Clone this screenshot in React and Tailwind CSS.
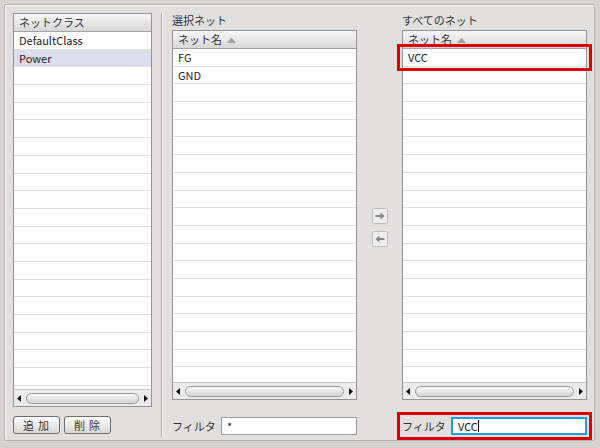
import React from "react";

const FONT = { fontFamily: '"Noto Sans CJK JP", "Noto Sans", sans-serif' };

const SortArrow = () => (
	<svg width="9" height="6" viewBox="0 0 9 6" className="ml-[5px]">
		<path d="M0 6 L4.5 0.5 L9 6 Z" fill="#a3a3a3" />
	</svg>
);

const ScrollBar = () => (
	<div className="h-[17px] shrink-0 flex items-center border-t border-[#c8c8c8] bg-[#ebebeb] px-[3px]">
		<svg width="4" height="7" viewBox="0 0 4 7">
			<path d="M4 0 L0 3.5 L4 7 Z" fill="#111" />
		</svg>
		<div className="flex-1 mx-[5px] h-[11px] rounded-full border border-[#9a9a9a] bg-gradient-to-b from-[#f8f8f8] to-[#d4d4d4]" />
		<svg width="4" height="7" viewBox="0 0 4 7">
			<path d="M0 0 L4 3.5 L0 7 Z" fill="#111" />
		</svg>
	</div>
);

const ListBox = ({ title, sort, rows, selected, height }) => (
	<div
		className="flex flex-col border border-[#8f959a] bg-white overflow-hidden"
		style={{ height }}
	>
		<div className="h-[18px] shrink-0 flex items-center pl-[5px] text-[11px] text-[#333] bg-gradient-to-b from-[#f7f7f7] to-[#d8d8d8] border-b border-[#a5a5a5]">
			<span>{title}</span>
			{sort && <SortArrow />}
		</div>
		<div className="flex-1 overflow-hidden">
			{Array.from({ length: 24 }).map((_, i) => (
				<div
					key={i}
					className={`h-[17.7px] flex items-center pl-[5px] text-[11px] text-[#222] border-b border-[#e0e0e0] ${
						selected === i ? "bg-[#dddded]" : "bg-white"
					}`}
				>
					{rows[i] || ""}
				</div>
			))}
		</div>
		<ScrollBar />
	</div>
);

const GrayButton = ({ children }) => (
	<button className="w-[47px] h-[18px] rounded-[3px] border border-[#6e6e6e] bg-gradient-to-b from-[#fbfbfb] to-[#d9d9d9] text-[11px] text-[#333] tracking-[4px] pl-[3px] flex items-center justify-center">
		{children}
	</button>
);

const ArrowButton = ({ dir }) => (
	<div className="w-[16px] h-[16px] rounded-[2px] border border-[#bdbdbd] bg-[#eeeeee] flex items-center justify-center">
		<svg width="10" height="8" viewBox="0 0 10 8">
			{dir === "right" ? (
				<path d="M0.5 3 H5.5 V0.5 L9.5 4 L5.5 7.5 V5 H0.5 Z" fill="#858585" />
			) : (
				<path d="M9.5 3 H4.5 V0.5 L0.5 4 L4.5 7.5 V5 H9.5 Z" fill="#858585" />
			)}
		</svg>
	</div>
);

const FilterRow = ({ value, active }) => (
	<div className="h-[18px] flex items-center">
		<span className="w-[49px] text-[11px] text-[#333]">フィルタ</span>
		<div
			className={`flex-1 h-full bg-white flex items-center pl-[5px] text-[11px] text-[#222] ${
				active ? "border-2 border-[#1e9fe3]" : "border border-[#9c9c9c]"
			}`}
		>
			{value}
			{active && <span className="w-px h-[12px] bg-[#111]" />}
		</div>
	</div>
);

export default function App() {
	return (
		<div className="w-[600px] h-[448px] bg-[#d5d3d2] pt-[4px] pl-[4px] pr-[5px]" style={FONT}>
			<div className="h-[437px] rounded-[2px] border border-[#b3b1b0] shadow-[inset_1px_1px_0_#ffffff] bg-[#e2e0df] pt-[8px] pl-[8px] flex">
				{/* left: net classes */}
				<div className="w-[139px] flex flex-col">
					<ListBox title="ネットクラス" rows={["DefaultClass", "Power"]} selected={1} height={394} />
					<div className="mt-[9px] flex gap-[4px]">
						<GrayButton>追加</GrayButton>
						<GrayButton>削除</GrayButton>
					</div>
				</div>

				<div className="ml-[9px] w-[2px] h-[424px] border-l border-[#a9a7a6] border-r border-r-white" />

				{/* middle: selected nets */}
				<div className="ml-[9px] w-[185px] flex flex-col">
					<div className="h-[17px] text-[11px] text-[#333] leading-[14px]">選択ネット</div>
					<ListBox title="ネット名" sort rows={["FG", "GND"]} height={370} />
					<div className="mt-[17px]">
						<FilterRow value="*" />
					</div>
				</div>

				{/* move buttons */}
				<div className="w-[45px] flex flex-col items-center pt-[195px] gap-[7px]">
					<ArrowButton dir="right" />
					<ArrowButton dir="left" />
				</div>

				{/* right: all nets */}
				<div className="w-[185px] flex flex-col relative">
					<div className="h-[17px] text-[11px] text-[#333] leading-[14px]">すべてのネット</div>
					<ListBox title="ネット名" sort rows={["VCC"]} height={370} />
					<div className="mt-[17px]">
						<FilterRow value="VCC" active />
					</div>
					<div className="absolute left-[-5px] right-[-5px] top-[31px] h-[27px] border-[3px] border-[#dc0000]" />
					<div className="absolute left-[-5px] right-[-5px] top-[399px] h-[28px] border-[3px] border-[#dc0000]" />
				</div>
			</div>
		</div>
	);
}
